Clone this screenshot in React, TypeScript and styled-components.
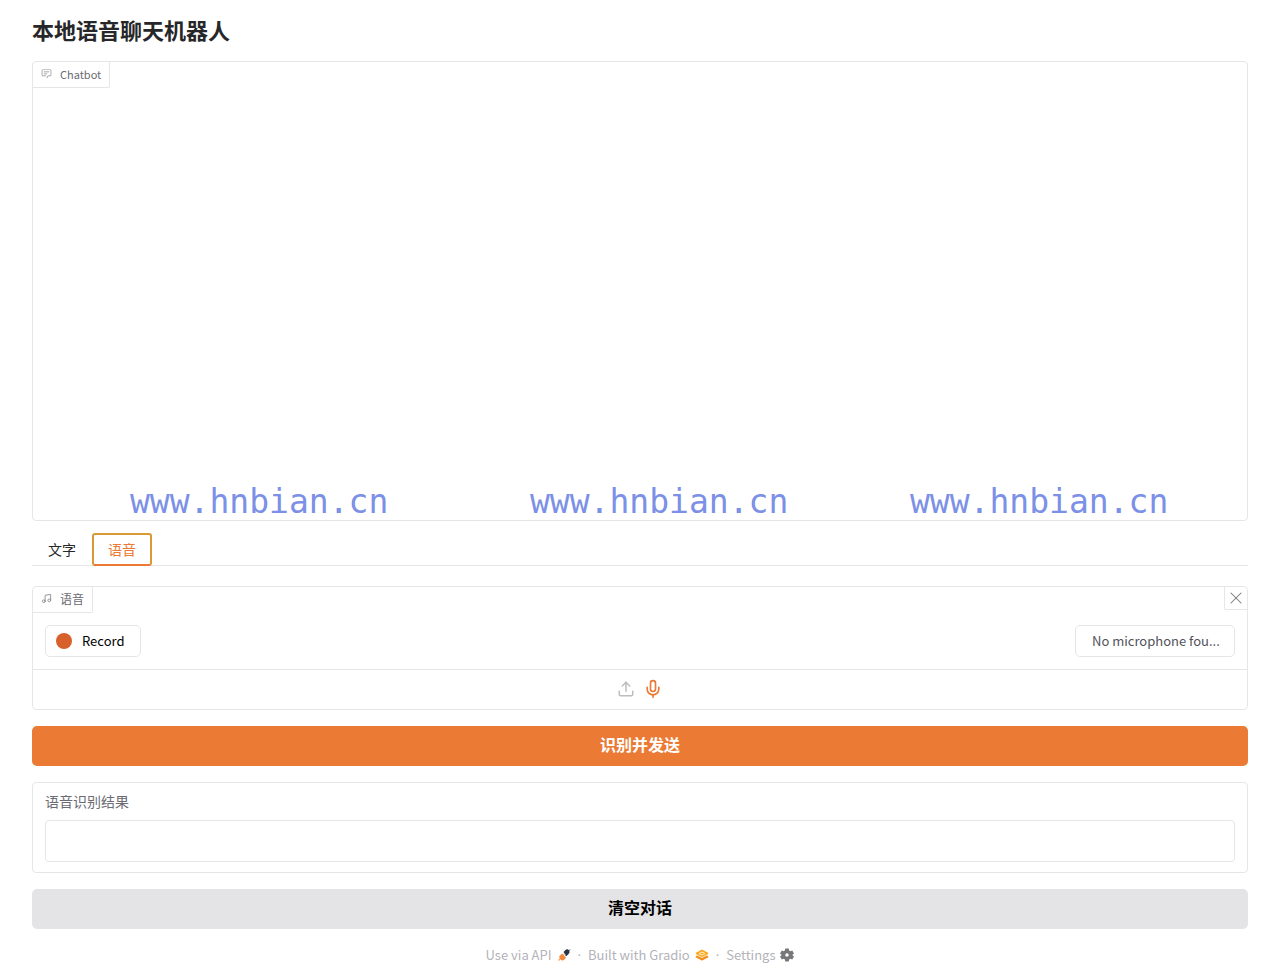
import React, { useState } from "react";
import styled, { createGlobalStyle, css } from "styled-components";
import { Music, Upload, Mic, X } from "lucide-react";

const line = "#e6e6e9";
const orange = "#ea7a34";

const GlobalStyle = createGlobalStyle`
  * { box-sizing: border-box; }
  body { margin: 0; background: #fff; color: #27272a; }
  body, button, input, select {
    font-family: "Noto Sans CJK SC", "Noto Sans", sans-serif;
  }
`;

const Page = styled.main`
  display: flex;
  flex-direction: column;
  gap: 16px;
  padding: 14px 32px 12px;
`;

const Title = styled.h1`
  margin: 0;
  font-size: 22px;
  line-height: 31px;
  font-weight: 700;
`;

const Panel = styled.section`
  position: relative;
  border: 1px solid ${line};
  border-radius: 4px;
  background: #fff;
`;

const ChatPanel = styled(Panel)`
  height: 460px;
  margin-bottom: -4px;
`;

const PanelLabel = styled.div`
  display: inline-flex;
  align-items: center;
  gap: 8px;
  height: 26px;
  padding: 0 8px 2px;
  border: solid ${line};
  border-width: 0 1px 1px 0;
  border-radius: 4px 0 2px 0;
  color: #6b6b73;
  font-size: 12px;
  line-height: 16px;
  vertical-align: top;
  svg { display: block; color: #8d8d95; }
`;

const ChatLabel = styled(PanelLabel)`
  font-size: 11px;
`;

const Watermark = styled.span<{ $left: number }>`
  position: absolute;
  left: ${(p) => p.$left}px;
  bottom: 0;
  color: #7b90e6;
  font-family: "DejaVu Sans Mono", monospace;
  font-size: 33px;
  line-height: 37px;
  white-space: nowrap;
  pointer-events: none;
`;

const TabBar = styled.div`
  display: flex;
  border-bottom: 1px solid ${line};
  margin-bottom: 4px;
`;

const Tab = styled.button<{ $active: boolean }>`
  height: 33px;
  margin-bottom: -1px;
  padding: 0 14px 2px;
  border: 2px solid transparent;
  border-radius: 3px;
  background: none;
  color: #27272a;
  font-size: 14px;
  line-height: 20px;
  ${(p) =>
    p.$active &&
    css`
      border-color: #d79a35;
      border-bottom-color: ${orange};
      color: ${orange};
    `}
`;

const CloseButton = styled.button`
  position: absolute;
  top: 0;
  right: 0;
  display: grid;
  place-items: center;
  width: 23px;
  height: 23px;
  padding: 0;
  border: solid ${line};
  border-width: 0 0 1px 1px;
  border-radius: 0 4px 0 2px;
  background: #fff;
  color: #77777d;
`;

const RecordRow = styled.div`
  display: flex;
  justify-content: space-between;
  padding: 12px;
`;

const RecordButton = styled.button`
  display: flex;
  align-items: center;
  gap: 10px;
  height: 32px;
  padding: 0 16px 0 10px;
  border: 1px solid ${line};
  border-radius: 5px;
  background: #fff;
  color: #000;
  font-size: 13px;
  line-height: 20px;
  font-weight: 400;
`;

const RecordDot = styled.span`
  width: 16px;
  height: 16px;
  border-radius: 50%;
  background: #d8602b;
`;

const DeviceSelect = styled.select`
  appearance: none;
  width: 160px;
  height: 32px;
  padding: 0 12px 0 16px;
  border: 1px solid ${line};
  border-radius: 5px;
  background: #fff;
  color: #52525b;
  font-size: 13px;
  line-height: 20px;
`;

const SourceBar = styled.div`
  display: flex;
  align-items: center;
  justify-content: center;
  gap: 8px;
  height: 40px;
  padding-bottom: 2px;
  border-top: 1px solid ${line};
`;

const SourceButton = styled.button<{ $active?: boolean }>`
  display: grid;
  place-items: center;
  padding: 0;
  border: 0;
  background: none;
  color: ${(p) => (p.$active ? orange : "#bcbcc1")};
`;

const ActionButton = styled.button<{ $primary?: boolean }>`
  height: 40px;
  padding: 0 16px 4px;
  border: 0;
  border-radius: 5px;
  background: ${(p) => (p.$primary ? orange : "#e4e4e7")};
  color: ${(p) => (p.$primary ? "#fff" : "#000")};
  font-size: 16px;
  line-height: 24px;
  font-weight: 700;
`;

const FieldPanel = styled(Panel)`
  padding: 8px 12px 10px;
`;

const FieldLabel = styled.label`
  display: block;
  color: #6b6b73;
  font-size: 14px;
  line-height: 20px;
`;

const TextInput = styled.input`
  display: block;
  width: 100%;
  height: 42px;
  margin-top: 9px;
  padding: 0 12px;
  border: 1px solid ${line};
  border-radius: 4px;
  font-size: 14px;
`;

const Footer = styled.footer`
  display: flex;
  justify-content: center;
  align-items: center;
  gap: 7px;
  color: #b3b3b9;
  font-size: 13px;
  line-height: 20px;
`;

const Separator = styled.span`
  font-family: "Noto Sans", sans-serif;
`;

const FooterLink = styled.a`
  display: flex;
  align-items: center;
  gap: 5px;
  color: inherit;
  text-decoration: none;
`;

const ChatIcon = () => (
  <svg width="11" height="11" viewBox="0 0 32 32" fill="currentColor" aria-hidden="true">
    <path d="M17.74 30L16 29l4-7h6a2 2 0 0 0 2-2V8a2 2 0 0 0-2-2H6a2 2 0 0 0-2 2v12a2 2 0 0 0 2 2h9v2H6a4 4 0 0 1-4-4V8a4 4 0 0 1 4-4h20a4 4 0 0 1 4 4v12a4 4 0 0 1-4 4h-4.84Z" />
    <path d="M8 10h16v2H8zm0 6h10v2H8z" />
  </svg>
);

const PlugIcon = () => (
  <svg width="14" height="14" viewBox="0 0 28 28" fill="none" aria-hidden="true">
    <path d="M26 3 23 6" stroke="#2b3345" strokeWidth="2" />
    <path d="M13 8 17 4c3-3 6-1 7 1s2 4-1 7l-4 4z" fill="#2b3345" />
    <path d="M14 13l2-2M17 16l2-2" stroke="#2b3345" strokeWidth="2" />
    <path d="M10 11 18 19l-3 4c-3 3-6 2-8 0s-4-5-1-8z" fill="#f58a3c" />
    <path d="M6 22 3 25" stroke="#f9a45c" strokeWidth="3" />
  </svg>
);

const GradioIcon = () => (
  <svg width="14" height="12" viewBox="0 0 28 24" fill="none" aria-hidden="true">
    <path d="M1 8 14 1l13 7-3 4 3 4-13 7L1 16l3-4z" fill="#fba81f" />
    <path d="M1 16l6-3 7 4 7-4 6 3-13 7z" fill="#f58a1f" />
    <path d="M8 9l6-3 6 3-6 3zM4 12l10 5 10-5" stroke="#fff0c8" strokeWidth="2" />
  </svg>
);

const GearIcon = () => (
  <svg width="14" height="14" viewBox="0 0 24 24" fill="#77777a" aria-hidden="true">
    <path fillRule="evenodd" d="M9 1h6l.6 3.3 2 1.2L21 4.300l3 5.200-2.600 2.200v.6L24 14.500l-3 5.200-3.300-1.200-2 1.200L15 23H9l-.6-3.300-2-1.200L3 19.700 0 14.500l2.600-2.200v-.6L0 9.500l3-5.200 3.300 1.200 2-1.200zM12 9a3 3 0 1 0 0 6 3 3 0 0 0 0-6z" />
  </svg>
);

const tabs = ["文字", "语音"];

export default function App() {
  const [active, setActive] = useState("语音");
  const [result, setResult] = useState("");

  return (
    <>
      <GlobalStyle />
      <Page>
        <Title>本地语音聊天机器人</Title>
        <ChatPanel>
          <ChatLabel><ChatIcon />Chatbot</ChatLabel>
          {[97, 497, 877].map((left) => (
            <Watermark key={left} $left={left}>www.hnbian.cn</Watermark>
          ))}
        </ChatPanel>
        <TabBar role="tablist">
          {tabs.map((tab) => (
            <Tab key={tab} role="tab" aria-selected={tab === active} $active={tab === active} onClick={() => setActive(tab)}>
              {tab}
            </Tab>
          ))}
        </TabBar>
        <Panel>
          <PanelLabel><Music size={11} strokeWidth={2} />语音</PanelLabel>
          <CloseButton aria-label="Clear"><X size={20} strokeWidth={1.25} /></CloseButton>
          <RecordRow>
            <RecordButton><RecordDot />Record</RecordButton>
            <DeviceSelect aria-label="Input device">
              <option>No microphone fou...</option>
            </DeviceSelect>
          </RecordRow>
          <SourceBar>
            <SourceButton aria-label="Upload file"><Upload size={18} strokeWidth={2} /></SourceButton>
            <SourceButton aria-label="Record audio" $active><Mic size={20} strokeWidth={2} /></SourceButton>
          </SourceBar>
        </Panel>
        <ActionButton $primary>识别并发送</ActionButton>
        <FieldPanel>
          <FieldLabel htmlFor="result">语音识别结果</FieldLabel>
          <TextInput id="result" value={result} onChange={(e) => setResult(e.target.value)} />
        </FieldPanel>
        <ActionButton>清空对话</ActionButton>
        <Footer>
          <FooterLink href="#api">Use via API <PlugIcon /></FooterLink>
          <Separator>·</Separator>
          <FooterLink href="#gradio">Built with Gradio <GradioIcon /></FooterLink>
          <Separator>·</Separator>
          <FooterLink href="#settings">Settings <GearIcon /></FooterLink>
        </Footer>
      </Page>
    </>
  );
}
